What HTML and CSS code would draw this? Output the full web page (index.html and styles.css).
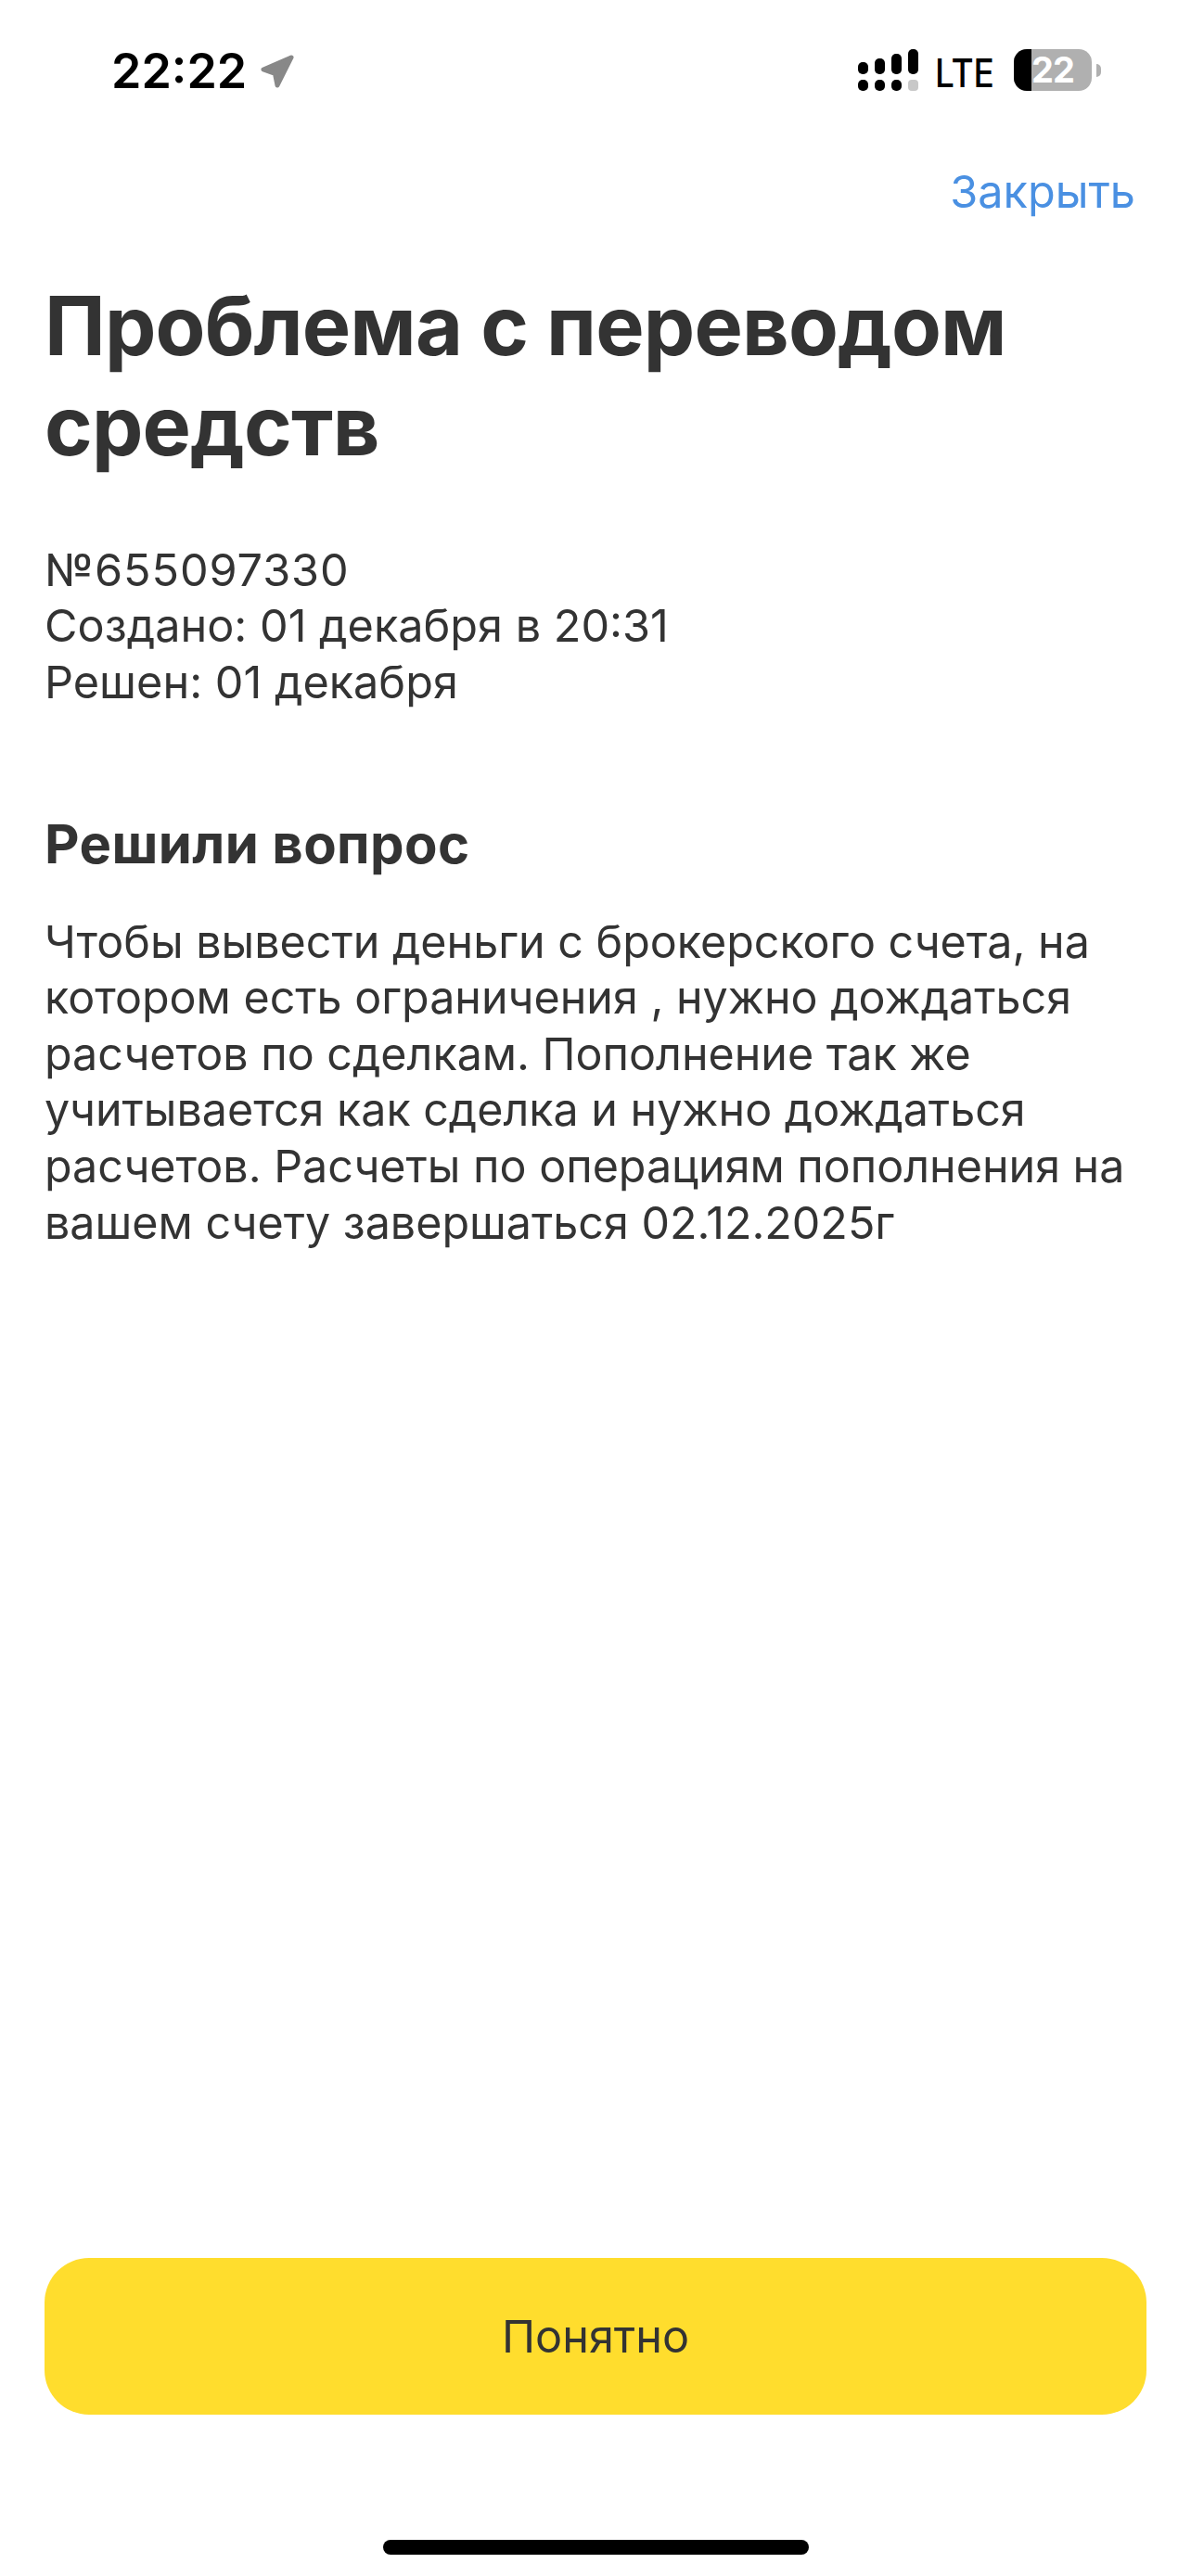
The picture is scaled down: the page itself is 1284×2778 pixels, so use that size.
FILE: index.html
```html
<!DOCTYPE html>
<html lang="ru">
<head>
<meta charset="utf-8">
<title>Проблема с переводом средств</title>
<link rel="stylesheet" href="styles.css">
</head>
<body>
<div class="screen">
  <header class="status">
    <div class="status-left">
      <span class="time">22:22</span>
      <svg class="loc" width="36" height="36" viewBox="0 0 36 36"><path d="M33 3 L3 16 L15.500 20.500 L18 33 Z" fill="#888" stroke="#888" stroke-width="5" stroke-linejoin="round"/></svg>
    </div>
    <div class="status-right">
      <svg class="signal" width="65" height="45" viewBox="0 0 65 45">
        <rect x="0" y="14" width="11" height="13" rx="5" fill="#000"/>
        <rect x="0" y="33" width="11" height="12" rx="5" fill="#000"/>
        <rect x="18" y="10" width="11" height="17" rx="5" fill="#000"/>
        <rect x="18" y="33" width="11" height="12" rx="5" fill="#000"/>
        <rect x="36" y="5" width="11" height="22" rx="5" fill="#000"/>
        <rect x="36" y="33" width="11" height="12" rx="5" fill="#000"/>
        <rect x="54" y="0" width="11" height="27" rx="5" fill="#000"/>
        <rect x="54" y="33" width="11" height="12" rx="4" fill="#c8c8c8"/>
      </svg>
      <span class="lte">LTE</span>
      <div class="battery">
        <div class="battery-body"><span class="battery-fill"></span><span class="battery-num">22</span></div>
        <span class="battery-cap"></span>
      </div>
    </div>
  </header>
  <div class="close-row"><span class="close">Закрыть</span></div>
  <main class="content">
    <h1 class="title">Проблема с переводом средств</h1>
    <div class="meta">
      <div class="meta-number">№655097330</div>
      <div>Создано: 01 декабря в 20:31</div>
      <div>Решен: 01 декабря</div>
    </div>
    <h2 class="subtitle">Решили вопрос</h2>
    <p class="body">Чтобы вывести деньги с брокерского счета, на<br>котором есть ограничения , нужно дождаться<br>расчетов по сделкам. Пополнение так же<br>учитывается как сделка и нужно дождаться<br>расчетов. Расчеты по операциям пополнения на<br>вашем счету завершаться 02.12.2025г</p>
  </main>
  <footer class="footer">
    <button class="btn">Понятно</button>
    <div class="home"></div>
  </footer>
</div>
</body>
</html>
```
FILE: styles.css
```css
* { box-sizing: border-box; }
html, body { margin: 0; padding: 0; background: #fff; }
body { font-family: Inter, "Liberation Sans", sans-serif; color: #333; }
.screen { width: 1284px; height: 2778px; display: flex; flex-direction: column; }
.status { height: 177px; padding: 49px 97px 0 120px; display: flex; justify-content: space-between; align-items: flex-start; }
.status-left { display: flex; align-items: center; gap: 15px; }
.time { font-size: 52px; line-height: 56px; font-weight: 600; color: #000; }
.loc { display: block; }
.status-right { display: flex; align-items: flex-start; margin-top: 4px; }
.signal { display: block; margin-right: 18px; }
.lte { display: block; width: 64px; font-size: 43px; line-height: 51px; font-weight: 500; color: #000; margin-right: 21px; white-space: nowrap; transform: scaleX(0.86); transform-origin: left center; }
.battery { display: flex; align-items: center; gap: 5px; }
.battery-body { position: relative; width: 84px; height: 45px; border-radius: 14px; background: #b0b0b0; overflow: hidden; display: flex; align-items: center; justify-content: center; }
.battery-fill { position: absolute; left: 0; top: 0; bottom: 0; width: 19px; background: #000; }
.battery-num { position: relative; font-size: 38px; font-weight: 700; letter-spacing: -1px; color: #fff; line-height: 45px; }
.battery-cap { width: 5px; height: 14px; background: #b0b0b0; border-radius: 0 7px 7px 0; }
.close-row { display: flex; justify-content: flex-end; padding-right: 60px; height: 60px; }
.close { font-size: 48.6px; line-height: 60px; color: #4a90e2; }
.content { padding: 0 48px; flex: 1; }
.title { margin: 59.5px 0 0; font-size: 88px; line-height: 108px; font-weight: 700; color: #333; letter-spacing: -0.85px; }
.meta { margin-top: 72px; font-size: 48.6px; line-height: 60.6px; color: #333; }
.meta-number { letter-spacing: 0.9px; }
.subtitle { margin: 108.700px 0 0; font-size: 58px; line-height: 70px; font-weight: 700; letter-spacing: 0.4px; color: #333; }
.body { margin: 40.600px 0 0; font-size: 48.4px; line-height: 60.6px; color: #333; }
.footer { padding: 0 48px; display: flex; flex-direction: column; align-items: center; }
.btn { width: 100%; height: 169px; background: #ffdd2d; border: 0; border-radius: 48px; font-family: inherit; font-size: 48.6px; color: #333; }
.home { width: 459px; height: 16px; background: #000; border-radius: 8px; margin-top: 135px; margin-bottom: 23px; }
```
